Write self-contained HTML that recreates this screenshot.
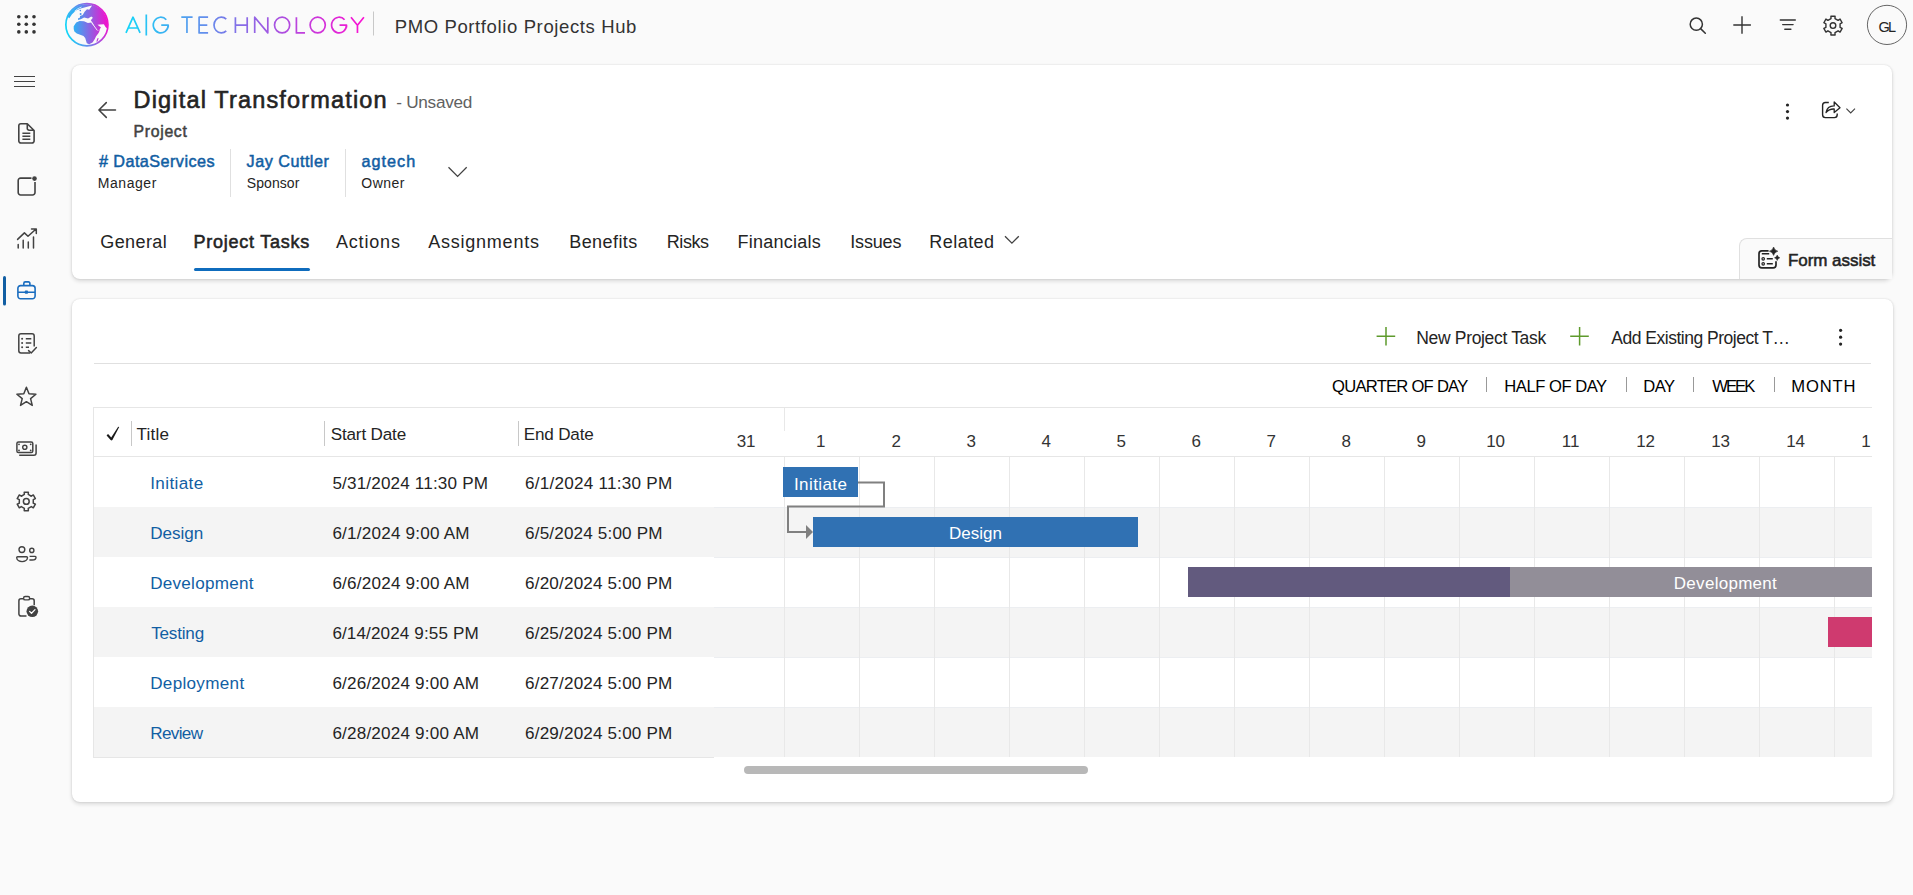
<!DOCTYPE html><html><head><meta charset='utf-8'><style>
*{margin:0;padding:0;box-sizing:border-box}
html,body{width:1913px;height:895px;overflow:hidden;background:#fafafa;font-family:"Liberation Sans",sans-serif}
.t{position:absolute;white-space:nowrap;line-height:1}
.a{position:absolute}
.card{position:absolute;background:#fff;border-radius:8px;box-shadow:0 0 2px rgba(0,0,0,.12),0 2px 4px rgba(0,0,0,.14)}
svg{position:absolute;overflow:visible}
</style></head><body>
<svg style="left:0;top:0" width="50" height="50"><circle cx="18.8" cy="16.7" r="1.8" fill="#333"/><circle cx="18.8" cy="24.3" r="1.8" fill="#333"/><circle cx="18.8" cy="31.9" r="1.8" fill="#333"/><circle cx="26.3" cy="16.7" r="1.8" fill="#333"/><circle cx="26.3" cy="24.3" r="1.8" fill="#333"/><circle cx="26.3" cy="31.9" r="1.8" fill="#333"/><circle cx="34" cy="16.7" r="1.8" fill="#333"/><circle cx="34" cy="24.3" r="1.8" fill="#333"/><circle cx="34" cy="31.9" r="1.8" fill="#333"/></svg>
<div class="t" style="left:394.70px;top:17.84px;font-size:18.5px;color:#333;letter-spacing:0.620px;">PMO Portfolio Projects Hub</div>
<div class="card" style="left:72px;top:65px;width:1820px;height:214px"></div>
<div class="card" style="left:72px;top:299px;width:1821px;height:503px"></div>
<div class="t" style="left:133.60px;top:89.11px;font-size:23.5px;color:#242424;letter-spacing:1.166px;-webkit-text-stroke:0.6px #242424;">Digital Transformation</div>
<div class="t" style="left:396.30px;top:94.44px;font-size:17.2px;color:#616161;letter-spacing:-0.297px;">- Unsaved</div>
<div class="t" style="left:133.55px;top:124.13px;font-size:15.8px;color:#424242;letter-spacing:0.687px;-webkit-text-stroke:0.5px #424242;">Project</div>
<div class="t" style="left:98.95px;top:152.69px;font-size:16.2px;color:#115ea3;letter-spacing:0.448px;-webkit-text-stroke:0.5px #115ea3;"># DataServices</div>
<div class="t" style="left:97.70px;top:175.85px;font-size:14px;color:#242424;letter-spacing:0.568px;">Manager</div>
<div class="a" style="left:230px;top:149px;width:1px;height:48px;background:#e0e0e0"></div>
<div class="t" style="left:246.55px;top:152.69px;font-size:16.2px;color:#115ea3;letter-spacing:0.493px;-webkit-text-stroke:0.5px #115ea3;">Jay Cuttler</div>
<div class="t" style="left:246.80px;top:175.85px;font-size:14px;color:#242424;letter-spacing:0.070px;">Sponsor</div>
<div class="a" style="left:345px;top:149px;width:1px;height:48px;background:#e0e0e0"></div>
<div class="t" style="left:361.55px;top:152.69px;font-size:16.2px;color:#115ea3;letter-spacing:1.000px;-webkit-text-stroke:0.5px #115ea3;">agtech</div>
<div class="t" style="left:361.30px;top:175.85px;font-size:14px;color:#242424;letter-spacing:0.457px;">Owner</div>
<div class="t" style="left:100.30px;top:232.56px;font-size:18px;color:#242424;letter-spacing:0.394px;">General</div>
<div class="t" style="left:193.58px;top:232.56px;font-size:18px;color:#242424;letter-spacing:0.751px;-webkit-text-stroke:0.55px #242424;">Project Tasks</div>
<div class="t" style="left:335.90px;top:232.56px;font-size:18px;color:#242424;letter-spacing:0.829px;">Actions</div>
<div class="t" style="left:428.30px;top:232.56px;font-size:18px;color:#242424;letter-spacing:0.756px;">Assignments</div>
<div class="t" style="left:569.20px;top:232.56px;font-size:18px;color:#242424;letter-spacing:0.437px;">Benefits</div>
<div class="t" style="left:666.70px;top:232.56px;font-size:18px;color:#242424;letter-spacing:-0.400px;">Risks</div>
<div class="t" style="left:737.50px;top:232.56px;font-size:18px;color:#242424;letter-spacing:0.241px;">Financials</div>
<div class="t" style="left:850.30px;top:232.56px;font-size:18px;color:#242424;letter-spacing:-0.184px;">Issues</div>
<div class="t" style="left:929.30px;top:232.56px;font-size:18px;color:#242424;letter-spacing:0.461px;">Related</div>
<div class="a" style="left:194px;top:268px;width:116px;height:3px;border-radius:2px;background:#0f6cbd"></div>
<div class="t" style="left:1416.30px;top:329.69px;font-size:17.5px;color:#242424;letter-spacing:-0.335px;">New Project Task</div>
<div class="t" style="left:1611.30px;top:329.69px;font-size:17.5px;color:#242424;letter-spacing:-0.489px;">Add Existing Project T…</div>
<div class="a" style="left:94px;top:363px;width:1777px;height:1px;background:#e0e0e0"></div>
<div class="t" style="left:1332.00px;top:378.55px;font-size:16.6px;color:#000;letter-spacing:-0.747px;">QUARTER OF DAY</div>
<div class="t" style="left:1504.30px;top:378.55px;font-size:16.6px;color:#000;letter-spacing:-0.470px;">HALF OF DAY</div>
<div class="t" style="left:1643.30px;top:378.55px;font-size:16.6px;color:#000;letter-spacing:-0.560px;">DAY</div>
<div class="t" style="left:1712.30px;top:378.55px;font-size:16.6px;color:#000;letter-spacing:-1.966px;">WEEK</div>
<div class="t" style="left:1791.30px;top:378.55px;font-size:16.6px;color:#000;letter-spacing:0.813px;">MONTH</div>
<div class="a" style="left:1486px;top:377px;width:1px;height:15px;background:#999"></div>
<div class="a" style="left:1626px;top:377px;width:1px;height:15px;background:#999"></div>
<div class="a" style="left:1693px;top:377px;width:1px;height:15px;background:#999"></div>
<div class="a" style="left:1774px;top:377px;width:1px;height:15px;background:#999"></div>
<div class="a" style="left:93px;top:407px;width:1779px;height:1px;background:#e6e6e6"></div>
<div class="a" style="left:93px;top:407px;width:1px;height:351px;background:#e6e6e6"></div>
<div class="a" style="left:93px;top:456px;width:1779px;height:1px;background:#e6e6e6"></div>
<div class="t" style="left:136.60px;top:425.52px;font-size:17.1px;color:#242424;letter-spacing:0.187px;">Title</div>
<div class="t" style="left:330.70px;top:425.52px;font-size:17.1px;color:#242424;letter-spacing:-0.161px;">Start Date</div>
<div class="t" style="left:523.70px;top:425.52px;font-size:17.1px;color:#242424;letter-spacing:-0.166px;">End Date</div>
<div class="t" style="left:150.20px;top:474.52px;font-size:17.1px;color:#115ea3;letter-spacing:0.378px;">Initiate</div>
<div class="t" style="left:332.40px;top:474.52px;font-size:17.1px;color:#242424;letter-spacing:0.168px;">5/31/2024 11:30 PM</div>
<div class="t" style="left:525.10px;top:474.52px;font-size:17.1px;color:#242424;letter-spacing:0.247px;">6/1/2024 11:30 PM</div>
<div class="a" style="left:94px;top:507px;width:1778px;height:50px;background:#f4f4f4"></div>
<div class="t" style="left:150.20px;top:524.52px;font-size:17.1px;color:#115ea3;letter-spacing:-0.041px;">Design</div>
<div class="t" style="left:332.40px;top:524.52px;font-size:17.1px;color:#242424;letter-spacing:0.213px;">6/1/2024 9:00 AM</div>
<div class="t" style="left:525.10px;top:524.52px;font-size:17.1px;color:#242424;letter-spacing:0.159px;">6/5/2024 5:00 PM</div>
<div class="t" style="left:150.20px;top:574.52px;font-size:17.1px;color:#115ea3;letter-spacing:0.253px;">Development</div>
<div class="t" style="left:332.40px;top:574.52px;font-size:17.1px;color:#242424;letter-spacing:0.213px;">6/6/2024 9:00 AM</div>
<div class="t" style="left:525.10px;top:574.52px;font-size:17.1px;color:#242424;letter-spacing:0.168px;">6/20/2024 5:00 PM</div>
<div class="a" style="left:94px;top:607px;width:1778px;height:50px;background:#f4f4f4"></div>
<div class="t" style="left:151.20px;top:624.52px;font-size:17.1px;color:#115ea3;letter-spacing:-0.192px;">Testing</div>
<div class="t" style="left:332.40px;top:624.52px;font-size:17.1px;color:#242424;letter-spacing:0.112px;">6/14/2024 9:55 PM</div>
<div class="t" style="left:525.10px;top:624.52px;font-size:17.1px;color:#242424;letter-spacing:0.168px;">6/25/2024 5:00 PM</div>
<div class="t" style="left:150.20px;top:674.52px;font-size:17.1px;color:#115ea3;letter-spacing:0.304px;">Deployment</div>
<div class="t" style="left:332.40px;top:674.52px;font-size:17.1px;color:#242424;letter-spacing:0.193px;">6/26/2024 9:00 AM</div>
<div class="t" style="left:525.10px;top:674.52px;font-size:17.1px;color:#242424;letter-spacing:0.168px;">6/27/2024 5:00 PM</div>
<div class="a" style="left:94px;top:707px;width:1778px;height:50px;background:#f4f4f4"></div>
<div class="t" style="left:150.20px;top:724.52px;font-size:17.1px;color:#115ea3;letter-spacing:-0.641px;">Review</div>
<div class="t" style="left:332.40px;top:724.52px;font-size:17.1px;color:#242424;letter-spacing:0.193px;">6/28/2024 9:00 AM</div>
<div class="t" style="left:525.10px;top:724.52px;font-size:17.1px;color:#242424;letter-spacing:0.168px;">6/29/2024 5:00 PM</div>
<div class="a" style="left:93px;top:757px;width:621px;height:1px;background:#e6e6e6"></div>
<div class="a" style="left:131px;top:421px;width:1px;height:25px;background:#c8c8c8"></div>
<div class="a" style="left:324px;top:421px;width:1px;height:25px;background:#c8c8c8"></div>
<div class="a" style="left:518px;top:421px;width:1px;height:25px;background:#c8c8c8"></div>
<svg style="left:0;top:0" width="1913" height="895"><path d="M106.6 435.4 Q107.4 434.2 108.4 434.3 L111.2 437.4 L118 427 Q118.6 426.5 119.2 427.1 L112.4 440 Q111.5 440.9 110.6 440.1 Z" fill="#1a1a1a"/></svg>
<div class="a" style="left:714px;top:507px;width:1158px;height:1px;background:#eceef1"></div>
<div class="a" style="left:714px;top:557px;width:1158px;height:1px;background:#eceef1"></div>
<div class="a" style="left:714px;top:607px;width:1158px;height:1px;background:#eceef1"></div>
<div class="a" style="left:714px;top:657px;width:1158px;height:1px;background:#eceef1"></div>
<div class="a" style="left:714px;top:707px;width:1158px;height:1px;background:#eceef1"></div>
<div class="a" style="left:784px;top:457px;width:1px;height:300px;background:#e8e8e8"></div>
<div class="a" style="left:859px;top:457px;width:1px;height:300px;background:#e8e8e8"></div>
<div class="a" style="left:934px;top:457px;width:1px;height:300px;background:#e8e8e8"></div>
<div class="a" style="left:1009px;top:457px;width:1px;height:300px;background:#e8e8e8"></div>
<div class="a" style="left:1084px;top:457px;width:1px;height:300px;background:#e8e8e8"></div>
<div class="a" style="left:1159px;top:457px;width:1px;height:300px;background:#e8e8e8"></div>
<div class="a" style="left:1234px;top:457px;width:1px;height:300px;background:#e8e8e8"></div>
<div class="a" style="left:1309px;top:457px;width:1px;height:300px;background:#e8e8e8"></div>
<div class="a" style="left:1384px;top:457px;width:1px;height:300px;background:#e8e8e8"></div>
<div class="a" style="left:1459px;top:457px;width:1px;height:300px;background:#e8e8e8"></div>
<div class="a" style="left:1534px;top:457px;width:1px;height:300px;background:#e8e8e8"></div>
<div class="a" style="left:1609px;top:457px;width:1px;height:300px;background:#e8e8e8"></div>
<div class="a" style="left:1684px;top:457px;width:1px;height:300px;background:#e8e8e8"></div>
<div class="a" style="left:1759px;top:457px;width:1px;height:300px;background:#e8e8e8"></div>
<div class="a" style="left:1834px;top:457px;width:1px;height:300px;background:#e8e8e8"></div>
<div class="a" style="left:784px;top:408px;width:1px;height:23px;background:#e8e8e8"></div>
<div class="t" style="left:736.67px;top:432.61px;font-size:17px;color:#333;">31</div>
<div class="t" style="left:815.90px;top:432.61px;font-size:17px;color:#333;">1</div>
<div class="t" style="left:891.40px;top:432.61px;font-size:17px;color:#333;">2</div>
<div class="t" style="left:966.40px;top:432.61px;font-size:17px;color:#333;">3</div>
<div class="t" style="left:1041.40px;top:432.61px;font-size:17px;color:#333;">4</div>
<div class="t" style="left:1116.40px;top:432.61px;font-size:17px;color:#333;">5</div>
<div class="t" style="left:1191.40px;top:432.61px;font-size:17px;color:#333;">6</div>
<div class="t" style="left:1266.40px;top:432.61px;font-size:17px;color:#333;">7</div>
<div class="t" style="left:1341.40px;top:432.61px;font-size:17px;color:#333;">8</div>
<div class="t" style="left:1416.40px;top:432.61px;font-size:17px;color:#333;">9</div>
<div class="t" style="left:1486.17px;top:432.61px;font-size:17px;color:#333;">10</div>
<div class="t" style="left:1561.80px;top:432.61px;font-size:17px;color:#333;">11</div>
<div class="t" style="left:1636.17px;top:432.61px;font-size:17px;color:#333;">12</div>
<div class="t" style="left:1711.17px;top:432.61px;font-size:17px;color:#333;">13</div>
<div class="t" style="left:1786.17px;top:432.61px;font-size:17px;color:#333;">14</div>
<div class="t" style="left:1861.17px;top:432.61px;font-size:17px;color:#333;">15</div>
<div class="a" style="left:783px;top:467px;width:75px;height:30px;background:#3071b3"></div>
<div class="t" style="left:794.00px;top:475.71px;font-size:17px;color:#fff;letter-spacing:0.395px;">Initiate</div>
<div class="a" style="left:813px;top:517px;width:325px;height:30px;background:#3071b3"></div>
<div class="t" style="left:948.90px;top:525.31px;font-size:17px;color:#fff;letter-spacing:0.047px;">Design</div>
<div class="a" style="left:1188px;top:567px;width:322px;height:30px;background:#625a7e"></div>
<div class="a" style="left:1510px;top:567px;width:362px;height:30px;background:#928e98"></div>
<div class="t" style="left:1673.80px;top:575.31px;font-size:17px;color:#fff;letter-spacing:0.286px;">Development</div>
<div class="a" style="left:1828px;top:617px;width:44px;height:30px;background:#cf3a6f"></div>
<svg style="left:0;top:0" width="1913" height="895"><path d="M858 482.5 H884 V506.5 H788 V532 H806" fill="none" stroke="#808080" stroke-width="2"/><path d="M806 525 L813 532 L806 539 Z" fill="#808080"/></svg>
<div class="a" style="left:1872px;top:408px;width:18px;height:360px;background:#fff"></div>
<div class="a" style="left:1870.5px;top:420px;width:20px;height:35px;background:#fff"></div>
<div class="a" style="left:744px;top:766px;width:344px;height:8px;border-radius:4px;background:#b8b8b8"></div>
<svg style="left:0;top:0" width="1913" height="895"><path d="M14 76.5 H35 M14 81.5 H35 M14 86.5 H35" stroke="#424242" stroke-width="1.1" fill="none"/><path d="M20.9 123.7 H27.3 L34.1 130.5 V140.9 a2.1 2.1 0 0 1 -2.1 2.1 H20.9 a2.1 2.1 0 0 1 -2.1 -2.1 V125.8 a2.1 2.1 0 0 1 2.1 -2.1 Z M27.3 124 V128.4 a1.8 1.8 0 0 0 1.8 1.8 H33.8 M22.4 133.3 H30.3 M22.4 136.3 H30.3 M22.4 139.3 H30.3" stroke="#424242" stroke-width="1.6" fill="none" stroke-linejoin="round"/><path d="M31.5 178.1 H20.6 a2.4 2.4 0 0 0 -2.4 2.4 V192.6 a2.4 2.4 0 0 0 2.4 2.4 H32.6 a2.4 2.4 0 0 0 2.4 -2.4 V182" stroke="#424242" stroke-width="1.6" fill="none"/><circle cx="34.5" cy="178.6" r="2.3" fill="#424242"/><path d="M17.6 239.4 L24.4 232.9 L28 236.3 L35.8 229.2 M31.5 228.9 H36.3 V233.6 M18.2 244.6 V248 M23.2 240.2 V248 M28.3 242 V248 M33.5 236.9 V248" stroke="#424242" stroke-width="1.5" fill="none" stroke-linecap="round" stroke-linejoin="round"/><path d="M20.6 285.6 H32.4 a2.7 2.7 0 0 1 2.7 2.7 V296.1 a2.7 2.7 0 0 1 -2.7 2.7 H20.6 a2.7 2.7 0 0 1 -2.7 -2.7 V288.3 a2.7 2.7 0 0 1 2.7 -2.7 Z M23.8 285.4 V283.4 a1.5 1.5 0 0 1 1.5 -1.5 H28.4 a1.5 1.5 0 0 1 1.5 1.5 V285.4 M18 292.2 H35" stroke="#1a6dbf" stroke-width="1.6" fill="none"/><rect x="24.8" y="290.6" width="3.2" height="3.2" rx="0.8" fill="#1a6dbf"/><rect x="3" y="276" width="3" height="29.5" rx="1.5" fill="#115ea3"/><path d="M30 353 H21 a2.2 2.2 0 0 1 -2.2 -2.2 V335.9 a2.2 2.2 0 0 1 2.2 -2.2 H32 a2.2 2.2 0 0 1 2.2 2.2 V346.5 M25.8 338.8 H31.3 M25.8 343.1 H31.3 M25.8 347.3 H29" stroke="#424242" stroke-width="1.5" fill="none"/><path d="M28.6 350.6 L31.2 353 L36.4 347.6" stroke="#424242" stroke-width="1.5" fill="none" stroke-linecap="round" stroke-linejoin="round"/><circle cx="22.1" cy="338.8" r="1" fill="#424242"/><circle cx="22.1" cy="343.1" r="1" fill="#424242"/><circle cx="22.1" cy="347.3" r="1" fill="#424242"/><path d="M26.40 387.30 L28.99 393.74 L35.91 394.21 L30.58 398.66 L32.28 405.39 L26.40 401.70 L20.52 405.39 L22.22 398.66 L16.89 394.21 L23.81 393.74 Z" stroke="#424242" stroke-width="1.5" fill="none" stroke-linejoin="round"/><rect x="16.9" y="441.9" width="15.9" height="10.7" rx="1.6" stroke="#424242" stroke-width="1.5" fill="none"/><circle cx="24.8" cy="447.3" r="2.1" stroke="#424242" stroke-width="1.4" fill="none"/><path d="M19.2 455.2 H33.8 a2.3 2.3 0 0 0 2.3 -2.3 V444.6" stroke="#424242" stroke-width="1.5" fill="none"/><circle cx="19" cy="444.3" r="0.9" fill="#424242"/><circle cx="30.7" cy="444.3" r="0.9" fill="#424242"/><circle cx="19" cy="450.4" r="0.9" fill="#424242"/><circle cx="30.7" cy="450.4" r="0.9" fill="#424242"/><path d="M24.35 494.47 L24.23 492.13 L28.37 492.13 L28.25 494.47 L31.32 496.24 L33.29 494.97 L35.37 498.56 L33.28 499.63 L33.28 503.17 L35.37 504.24 L33.29 507.83 L31.32 506.56 L28.25 508.33 L28.37 510.67 L24.23 510.67 L24.35 508.33 L21.28 506.56 L19.31 507.83 L17.23 504.24 L19.32 503.17 L19.32 499.63 L17.23 498.56 L19.31 494.97 L21.28 496.24 Z" stroke="#424242" stroke-width="1.5" fill="none" stroke-linejoin="round"/><circle cx="26.3" cy="501.4" r="2.9" stroke="#424242" stroke-width="1.5" fill="none"/><circle cx="21.9" cy="549.6" r="2.9" stroke="#424242" stroke-width="1.4" fill="none"/><circle cx="31.8" cy="550.4" r="2.1" stroke="#424242" stroke-width="1.4" fill="none"/><path d="M17.6 556.7 H26.6 a0.9 0.9 0 0 1 0.9 0.9 C27.5 560 25 561.6 22.1 561.6 C19.2 561.6 16.7 560 16.7 557.6 a0.9 0.9 0 0 1 0.9 -0.9 Z M29.6 556.4 H35.2 a0.8 0.8 0 0 1 0.8 0.8 C36 559 34.3 560 32.2 560 H29.4" stroke="#424242" stroke-width="1.4" fill="none"/><path d="M23.2 598.8 H21 a2.1 2.1 0 0 0 -2.1 2.1 V613.9 a2.1 2.1 0 0 0 2.1 2.1 H26.5 M29.9 598.8 H32.1 a2.1 2.1 0 0 1 2.1 2.1 V605.2" stroke="#424242" stroke-width="1.5" fill="none"/><rect x="23.6" y="596.5" width="6" height="3.4" rx="1.5" stroke="#424242" stroke-width="1.4" fill="none"/><circle cx="32.3" cy="611.3" r="5.8" fill="#424242"/><path d="M29.6 611.4 L31.5 613.2 L35 609.6" stroke="#fff" stroke-width="1.3" fill="none" stroke-linecap="round" stroke-linejoin="round"/><circle cx="1696.3" cy="24.2" r="6.1" stroke="#333" stroke-width="1.5" fill="none"/><path d="M1700.6 28.6 L1705.3 33.3" stroke="#333" stroke-width="1.5" stroke-linecap="round"/><path d="M1742 16.3 V33.8 M1733.3 25 H1750.9" stroke="#333" stroke-width="1.4"/><path d="M1780.3 20 H1795.3 M1782.7 24.6 H1793.1 M1784.8 29.3 H1790.9" stroke="#333" stroke-width="1.4" stroke-linecap="round"/><path d="M1831.02 18.57 L1830.91 16.23 L1835.09 16.23 L1834.98 18.57 L1838.09 20.37 L1840.07 19.10 L1842.16 22.73 L1840.08 23.80 L1840.08 27.40 L1842.16 28.47 L1840.07 32.10 L1838.09 30.83 L1834.98 32.63 L1835.09 34.97 L1830.91 34.97 L1831.02 32.63 L1827.91 30.83 L1825.93 32.10 L1823.84 28.47 L1825.92 27.40 L1825.92 23.80 L1823.84 22.73 L1825.93 19.10 L1827.91 20.37 Z" stroke="#333" stroke-width="1.4" fill="none" stroke-linejoin="round"/><circle cx="1833" cy="25.6" r="2.8" stroke="#333" stroke-width="1.4" fill="none"/><circle cx="1887" cy="24.9" r="19.6" stroke="#666" stroke-width="1" fill="none"/><path d="M115.5 110 H99.5 M106.3 102.6 L98.9 110 L106.3 117.4" stroke="#424242" stroke-width="1.5" fill="none" stroke-linecap="round" stroke-linejoin="round"/><path d="M448.5 167.3 L457.6 176.4 L466.7 167.3" stroke="#424242" stroke-width="1.3" fill="none"/><path d="M1005 236.2 L1011.9 243.1 L1018.8 236.2" stroke="#424242" stroke-width="1.3" fill="none"/><circle cx="1787.5" cy="105" r="1.6" fill="#242424"/><circle cx="1787.5" cy="111.6" r="1.6" fill="#242424"/><circle cx="1787.5" cy="118.1" r="1.6" fill="#242424"/><path d="M1828.8 102.5 H1825.4 a2.8 2.8 0 0 0 -2.8 2.8 V114.8 a2.8 2.8 0 0 0 2.8 2.8 H1834.4 a2.8 2.8 0 0 0 2.8 -2.8 V113.5" stroke="#242424" stroke-width="1.4" fill="none"/><path d="M1826 112.5 C1826.8 108.2 1830 105.8 1834.2 105.9 V102 L1840 107.7 L1834.2 112.6 V109 C1831 108.8 1828.2 110 1826 112.5 Z" stroke="#242424" stroke-width="1.3" fill="none" stroke-linejoin="round"/><path d="M1846.4 108.6 L1850.7 112.9 L1855 108.6" stroke="#424242" stroke-width="1.1" fill="none"/><path d="M1386 327 V345.4 M1376.6 336.2 H1395.2" stroke="#5e9a2c" stroke-width="1.5"/><path d="M1579.6 327 V345.4 M1570.2 336.2 H1588.8" stroke="#5e9a2c" stroke-width="1.5"/><circle cx="1840.6" cy="330.3" r="1.6" fill="#242424"/><circle cx="1840.6" cy="337.2" r="1.6" fill="#242424"/><circle cx="1840.6" cy="344.1" r="1.6" fill="#242424"/></svg>
<div class="a" style="left:1739px;top:238px;width:153px;height:41px;background:#fafafa;border-top:1px solid #e0e0e0;border-left:1px solid #e0e0e0;border-top-left-radius:8px"></div>
<svg style="left:0;top:0" width="1913" height="895"><path d="M1768.6 250.9 H1761.8 a2.8 2.8 0 0 0 -2.8 2.8 V265 a2.8 2.8 0 0 0 2.8 2.8 H1773.2 a2.8 2.8 0 0 0 2.8 -2.8 V261.2" stroke="#242424" stroke-width="1.7" fill="none"/><path d="M1761.8 253.8 H1769.2 M1766.8 258.8 H1772.8 M1766.8 263.8 H1772.8" stroke="#242424" stroke-width="1.5"/><circle cx="1763.2" cy="258.8" r="1.25" stroke="#242424" stroke-width="1.2" fill="none"/><circle cx="1763.2" cy="263.8" r="1.25" stroke="#242424" stroke-width="1.2" fill="none"/><path d="M1773.6 247 Q1774.4 250.4 1777.8 251.2 Q1774.4 252 1773.6 255.4 Q1772.8 252 1769.4 251.2 Q1772.8 250.4 1773.6 247 Z" fill="#242424" stroke="#242424" stroke-width="0.6" stroke-linejoin="round"/><path d="M1777.2 255.1 Q1777.7 257.3 1779.9 257.8 Q1777.7 258.3 1777.2 260.5 Q1776.7 258.3 1774.5 257.8 Q1776.7 257.3 1777.2 255.1 Z" fill="#242424" stroke="#242424" stroke-width="0.5" stroke-linejoin="round"/></svg>
<div class="t" style="left:1787.98px;top:252.41px;font-size:17px;color:#242424;letter-spacing:-0.047px;-webkit-text-stroke:0.55px #242424;">Form assist</div>
<div class="t" style="left:1878.40px;top:19.53px;font-size:14.5px;color:#242424;letter-spacing:-1.579px;">GL</div>
<svg style="left:0;top:0" width="1913" height="895"><defs><linearGradient id="lg" gradientUnits="userSpaceOnUse" x1="125" y1="0" x2="365" y2="0"><stop offset="0" stop-color="#14d6f8"/><stop offset="0.5" stop-color="#8a6ae6"/><stop offset="1" stop-color="#fb12d2"/></linearGradient><linearGradient id="gr" gradientUnits="userSpaceOnUse" x1="66" y1="30" x2="108" y2="20"><stop offset="0" stop-color="#0fd8f8"/><stop offset="0.5" stop-color="#7a78ea"/><stop offset="1" stop-color="#f60ecc"/></linearGradient><linearGradient id="gc" gradientUnits="userSpaceOnUse" x1="74" y1="0" x2="107" y2="0"><stop offset="0" stop-color="#30b0f4"/><stop offset="0.5" stop-color="#9060e2"/><stop offset="1" stop-color="#f012cc"/></linearGradient></defs><path d="M126 32.9 L133 17.2 L140.1 32.9 M128.2 28 H137.9 M146.3 14.5 V35.5 M166.29 19.80 A7.45 7.85 0 1 0 168.20 25.05 M161.25 25.049999999999997 H168.20 V27.55 M181.3 17.2 H192.6 M186.95 17.2 V32.9 M208.1 17.2 H199.1 V32.9 H208.1 M199.1 25.049999999999997 H207.3 M226.27 19.22 A7.35 7.85 0 1 0 226.27 30.88 M235.4 17.2 V32.9 M247.2 17.2 V32.9 M235.4 25.049999999999997 H247.2 M254.7 32.9 V17.2 L267.8 32.9 V17.2 M289.70 25.05 A7.6 7.85 0 0 0 274.50 25.05 M274.50 25.05 A7.6 7.85 0 0 0 289.70 25.05 M296.4 17.2 V32.9 H305 M325.30 25.05 A7.6 7.85 0 0 0 310.10 25.05 M310.10 25.05 A7.6 7.85 0 0 0 325.30 25.05 M344.59 19.80 A7.45 7.85 0 1 0 346.50 25.05 M339.55 25.049999999999997 H346.50 V27.55 M351 17.2 L357.45 25.3 L363.9 17.2 M357.45 25.3 V32.9" stroke="url(#lg)" stroke-width="1.7" fill="none" stroke-linejoin="round"/><path d="M373.5 11.5 V35.5" stroke="#c8c8c8" stroke-width="1"/><circle cx="86.9" cy="24.75" r="21.05" stroke="url(#gr)" stroke-width="1.7" fill="none"/><path d="M67.78 17.07 L68.40 15.69 L69.11 14.36 L69.93 13.08 L70.83 11.86 L71.82 10.72 L72.89 9.65 L74.04 8.66 L75.26 7.76 L76.54 6.95 L77.87 6.23 L79.26 5.62 L80.68 5.11 L82.14 4.71 L83.63 4.41 L85.13 4.23 L86.65 4.15 L88.16 4.19 L89.67 4.34 L91.16 4.60 L92.63 4.96 L94.07 5.44 L95.47 6.02 L96.82 6.70 L98.12 7.47 L99.36 8.34 L100.53 9.30 L101.63 10.35 L102.65 11.47 L103.58 12.66 L104.42 13.92 L105.17 15.24 L105.82 16.60 L106.37 18.02 L106.81 19.47 L107.15 20.94 L107.37 22.44 L107.48 23.95 L107.49 25.47 L107.38 26.98 L107.16 28.47 L105.50 27.00 L103.90 24.20 L100.00 24.40 L97.50 24.70 L101.00 27.40 L99.20 29.50 L97.60 31.20 L94.70 27.20 L92.90 23.30 L92.40 22.40 L90.80 20.20 L92.90 17.80 L91.30 16.50 L88.10 18.60 L84.10 17.50 L80.80 19.20 L78.20 20.00 L77.90 18.60 L80.00 17.50 L80.00 15.90 L82.70 14.90 L84.60 11.70 L87.00 9.20 L89.20 9.80 L92.10 5.40 L88.10 6.40 L80.80 8.40 L76.00 10.60 L72.00 14.20 L69.30 18.20 Z M73.70 26.30 L76.20 22.40 L79.60 21.00 L84.00 21.20 L87.90 23.00 L91.30 22.50 L93.50 25.30 L97.30 30.30 L99.10 30.60 L100.70 26.30 L99.80 30.20 L98.60 33.10 L96.10 36.30 L94.80 39.10 L92.50 42.50 L89.20 44.30 L86.80 43.20 L85.20 38.10 L83.50 35.90 L76.80 33.60 L74.40 31.40 L73.70 29.10 Z M97.20 38.60 L98.70 38.00 L97.60 41.50 L96.40 41.80 Z" fill="url(#gc)"/><circle cx="80.3" cy="10.6" r="0.8" fill="#4a90ef"/><circle cx="80.6" cy="14.1" r="1" fill="#4a90ef"/><path d="M74.6 11.2 Q77.5 8.4 81.5 7" stroke="#fafafa" stroke-width="0.7" fill="none"/><path d="M91.6 22.6 L97.4 30.5" stroke="#fafafa" stroke-width="0.9"/></svg>
</body></html>
